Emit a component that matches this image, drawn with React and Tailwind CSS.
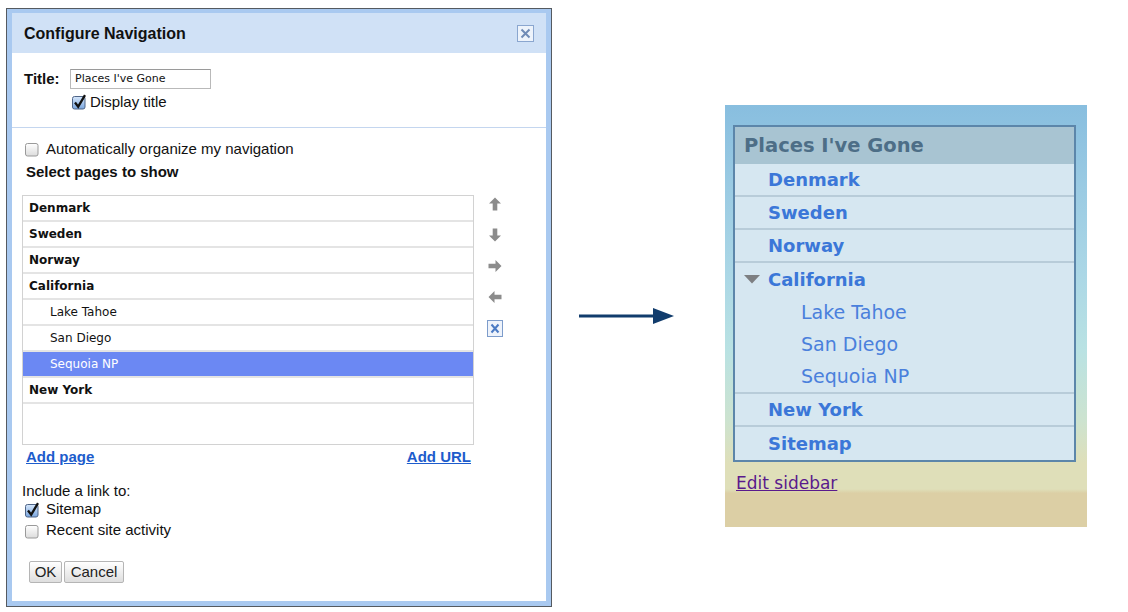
import React from "react";

function CheckBox({ checked }) {
  if (checked) {
    return (
      <svg width="15" height="16" viewBox="0 0 15 16" className="shrink-0 block">
        <defs>
          <linearGradient id="cbOn" x1="0" y1="0" x2="0" y2="1">
            <stop offset="0" stopColor="#d6e7fb" />
            <stop offset="1" stopColor="#7aa6df" />
          </linearGradient>
        </defs>
        <rect x="0.5" y="2.5" width="12.5" height="12.5" rx="2" fill="url(#cbOn)" stroke="#4f6587" />
        <path d="M3 8.5 L6.2 12.6 L13 1.2" fill="none" stroke="#111" strokeWidth="2.3" strokeLinejoin="miter" />
      </svg>
    );
  }
  return (
    <svg width="15" height="16" viewBox="0 0 15 16" className="shrink-0 block">
      <defs>
        <linearGradient id="cbOff" x1="0" y1="0" x2="0" y2="1">
          <stop offset="0" stopColor="#ffffff" />
          <stop offset="1" stopColor="#dcdcdc" />
        </linearGradient>
      </defs>
      <rect x="0.5" y="2.5" width="12.5" height="12.5" rx="2" fill="url(#cbOff)" stroke="#9a9a9a" />
    </svg>
  );
}

function XBox({ border, bg, stroke, w = 16, h = 16 }) {
  return (
    <svg width={w} height={h} viewBox={`0 0 ${w} ${h}`} className="block">
      <rect x="0.5" y="0.5" width={w - 1} height={h - 1} fill={bg} stroke={border} />
      <path d={`M4.5 4.5 L${w - 4.5} ${h - 4.5} M${w - 4.5} 4.5 L4.5 ${h - 4.5}`} stroke={stroke} strokeWidth="2" />
    </svg>
  );
}

function Arrow({ dir }) {
  const rot = { up: 0, right: 90, down: 180, left: 270 }[dir];
  return (
    <svg width="14" height="14" viewBox="0 0 14 14" className="block">
      <g transform={`rotate(${rot} 7 7)`}>
        <polygon points="7,0.5 13,6.5 9.3,6.5 9.3,13.5 4.7,13.5 4.7,6.5 1,6.5" fill="#8c8c8c" />
      </g>
    </svg>
  );
}

const pages = [
  { name: "Denmark", level: 0 },
  { name: "Sweden", level: 0 },
  { name: "Norway", level: 0 },
  { name: "California", level: 0 },
  { name: "Lake Tahoe", level: 1 },
  { name: "San Diego", level: 1 },
  { name: "Sequoia NP", level: 1, selected: true },
  { name: "New York", level: 0 },
];

function Dialog() {
  return (
    <div className="ml-[6px] mt-[8px] w-[546px] h-[599px] border border-[#555a60] bg-[#a9c9f0] shrink-0">
      <div className="h-full border-[5px] border-t-[4px] border-[#a9c9f0] flex flex-col bg-white" style={{ fontFamily: '"Liberation Sans", Arial, sans-serif' }}>
        {/* header */}
        <div className="h-[40px] bg-[#d0e1f6] flex items-center justify-between pl-[12px] pr-[12px] pt-[1px]">
          <span className="text-[16px] font-bold text-[#111]">Configure Navigation</span>
          <XBox border="#8aa6cf" bg="#edf3fb" stroke="#6f8bb6" w={17} h={17} />
        </div>

        {/* title section */}
        <div className="h-[75px] border-b border-[#c4d6ef] pl-[12px] pt-[16px]">
          <div className="flex items-center h-[20px]">
            <span className="text-[15px] font-bold text-[#111] w-[46px]">Title:</span>
            <div className="w-[141px] h-[20px] border border-[#b9b9b9] border-t-[#9a9a9a] flex items-center pl-[4px] text-[11px] text-[#111]" style={{ fontFamily: '"DejaVu Sans", sans-serif' }}>
              Places I've Gone
            </div>
          </div>
          <div className="flex items-center h-[20px] mt-[3px] ml-[48px] gap-[3px]">
            <CheckBox checked />
            <span className="text-[15px] text-[#111]">Display title</span>
          </div>
        </div>

        {/* pages section */}
        <div className="pl-[10px] pt-[11px] flex flex-col">
          <div className="flex items-center h-[20px] ml-[3px] gap-[6px]">
            <CheckBox />
            <span className="text-[15px] text-[#111]">Automatically organize my navigation</span>
          </div>
          <div className="h-[20px] mt-[3px] ml-[4px] flex items-center text-[15px] font-bold text-[#111]">Select pages to show</div>
          <div className="flex mt-[13px]">
            <div className="w-[452px] h-[250px] border border-[#d2d2d2]" style={{ fontFamily: '"DejaVu Sans", sans-serif' }}>
              {pages.map((p) => (
                <div
                  key={p.name}
                  className={`h-[26px] border-b-2 border-[#e4e4e4] flex items-center text-[12px] ${p.level ? "pl-[27px]" : "pl-[6px] font-bold"} ${p.selected ? "bg-[#6b88f3] text-white border-[#d8dff7]" : "text-[#111]"}`}
                >
                  {p.name}
                </div>
              ))}
            </div>
            <div className="flex flex-col items-center w-[16px] ml-[13px] pt-[2px]">
              <Arrow dir="up" />
              <div className="mt-[17px]"><Arrow dir="down" /></div>
              <div className="mt-[17px]"><Arrow dir="right" /></div>
              <div className="mt-[17px]"><Arrow dir="left" /></div>
              <div className="mt-[16px]">
                <XBox border="#7d9ccb" bg="#eef3fb" stroke="#4b7bc4" w={16} h={17} />
              </div>
            </div>
          </div>
          <div className="w-[452px] h-[20px] mt-[2px] flex items-center justify-between pl-[4px] pr-[3px] text-[15px] font-bold text-[#1d5ccc] underline">
            <span>Add page</span>
            <span>Add URL</span>
          </div>
          <div className="h-[18px] mt-[15px] flex items-center text-[15px] text-[#111]">Include a link to:</div>
          <div className="flex items-center h-[19px] ml-[3px] gap-[6px]">
            <CheckBox checked />
            <span className="text-[15px] text-[#111]">Sitemap</span>
          </div>
          <div className="flex items-center h-[19px] mt-[2px] ml-[3px] gap-[6px]">
            <CheckBox />
            <span className="text-[15px] text-[#111]">Recent site activity</span>
          </div>
          <div className="flex mt-[21px] ml-[7px] gap-[2px]">
            <button className="h-[22px] w-[33px] border border-[#b5b5b5] rounded-[2px] bg-[linear-gradient(to_bottom,#ffffff,#dedede)] text-[15px] text-[#222] flex items-center justify-center">OK</button>
            <button className="h-[22px] w-[60px] border border-[#b5b5b5] rounded-[2px] bg-[linear-gradient(to_bottom,#ffffff,#dedede)] text-[15px] text-[#222] flex items-center justify-center">Cancel</button>
          </div>
        </div>
      </div>
    </div>
  );
}

function SideRow({ children, last }) {
  return (
    <div className={`h-[33px] flex items-center pl-[33px] ${last ? "" : "border-b-2 border-[#b8ccd9]"} font-bold text-[18px] text-[#3b77d8]`}>
      {children}
    </div>
  );
}

function Sidebar() {
  return (
    <div
      className="ml-[50px] mt-[105px] w-[362px] h-[422px] shrink-0 pl-[8px] pr-[11px] pt-[20px] bg-[linear-gradient(to_bottom,#88bedf_0%,#9bcbe3_20%,#abd7e6_40%,#b9e2e3_58%,#cde3cf_75%,#dfdfb9_85%,#dfdfb9_91%,#dccfa5_92%,#dccfa5_100%)]"
      style={{ fontFamily: '"DejaVu Sans", Verdana, sans-serif' }}
    >
      <div className="border-2 border-[#5c86aa] bg-[#d6e7f1]">
        <div className="h-[37px] bg-[#a8c4d2] flex items-center pl-[9px] text-[19.5px] font-bold text-[#4d6e87]">Places I've Gone</div>
        <SideRow>Denmark</SideRow>
        <SideRow>Sweden</SideRow>
        <SideRow>Norway</SideRow>
        <div className="border-b-2 border-[#b8ccd9]">
          <div className="h-[33px] flex items-center pl-[9px] font-bold text-[18px] text-[#3b77d8]">
            <svg width="16" height="9" viewBox="0 0 16 9" className="block mr-[8px]">
              <polygon points="0,0 16,0 8,8.5" fill="#7d7f82" />
            </svg>
            California
          </div>
          <div className="h-[32px] flex items-center pl-[66px] text-[19px] text-[#4a80dc]">Lake Tahoe</div>
          <div className="h-[32px] flex items-center pl-[66px] text-[19px] text-[#4a80dc]">San Diego</div>
          <div className="h-[32px] flex items-center pl-[66px] text-[19px] text-[#4a80dc]">Sequoia NP</div>
        </div>
        <SideRow>New York</SideRow>
        <SideRow last>Sitemap</SideRow>
      </div>
      <div className="mt-[9px] ml-[3px] text-[17px] text-[#5a1a8c] underline">Edit sidebar</div>
    </div>
  );
}

export default function App() {
  return (
    <div className="w-[1128px] h-[612px] bg-white flex items-start overflow-hidden">
      <Dialog />
      <svg width="96" height="18" viewBox="0 0 96 18" className="ml-[27px] mt-[307px] shrink-0 block">
        <rect x="0" y="7.5" width="76" height="3" fill="#113c6c" />
        <polygon points="74,1 95,9 74,17" fill="#113c6c" />
      </svg>
      <Sidebar />
    </div>
  );
}
